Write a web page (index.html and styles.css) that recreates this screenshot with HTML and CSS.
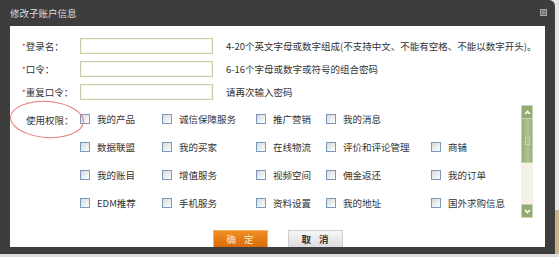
FILE: index.html
```html
<!DOCTYPE html>
<html lang="zh-CN">
<head>
    <meta charset="UTF-8">
    <title>修改子账户信息</title>
    <link rel="stylesheet" href="styles.css">
</head>
<body>
    <div class="dialog">
        <div class="dialog-title">
            <span>修改子账户信息</span>
            <span class="close-btn"></span>
        </div>
        <div class="dialog-body">
            <div class="form-row">
                <label class="form-label"><em>*</em>登录名：</label>
                <input type="text" class="text-input">
                <span class="hint">4-20个英文字母或数字组成(不支持中文、不能有空格、不能以数字开头)。</span>
            </div>
            <div class="form-row">
                <label class="form-label"><em>*</em>口令：</label>
                <input type="password" class="text-input">
                <span class="hint">6-16个字母或数字或符号的组合密码</span>
            </div>
            <div class="form-row">
                <label class="form-label"><em>*</em>重复口令：</label>
                <input type="password" class="text-input">
                <span class="hint">请再次输入密码</span>
            </div>

            <div class="perm-section">
                <span class="perm-circle"></span>
                <div class="perm-label">使用权限：</div>
                <div class="perm-box">
                    <div class="perm-grid">
                        <div class="perm-item"><span class="cb"></span>我的产品</div>
                        <div class="perm-item"><span class="cb"></span>诚信保障服务</div>
                        <div class="perm-item"><span class="cb"></span>推广营销</div>
                        <div class="perm-item"><span class="cb"></span>我的消息</div>
                        <div class="perm-item"></div>

                        <div class="perm-item"><span class="cb"></span>数据联盟</div>
                        <div class="perm-item"><span class="cb"></span>我的买家</div>
                        <div class="perm-item"><span class="cb"></span>在线物流</div>
                        <div class="perm-item"><span class="cb"></span>评价和评论管理</div>
                        <div class="perm-item"><span class="cb"></span>商铺</div>

                        <div class="perm-item"><span class="cb"></span>我的账目</div>
                        <div class="perm-item"><span class="cb"></span>增值服务</div>
                        <div class="perm-item"><span class="cb"></span>视频空间</div>
                        <div class="perm-item"><span class="cb"></span>佣金返还</div>
                        <div class="perm-item"><span class="cb"></span>我的订单</div>

                        <div class="perm-item"><span class="cb"></span>EDM推荐</div>
                        <div class="perm-item"><span class="cb"></span>手机服务</div>
                        <div class="perm-item"><span class="cb"></span>资料设置</div>
                        <div class="perm-item"><span class="cb"></span>我的地址</div>
                        <div class="perm-item"><span class="cb"></span>国外求购信息</div>
                    </div>
                    <div class="scrollbar">
                        <div class="sb-btn">
                            <svg width="7" height="5" viewBox="0 0 7 5"><path d="M1 4 L3.5 1.5 L6 4" fill="none" stroke="#fff" stroke-width="1.6"/></svg>
                        </div>
                        <div class="sb-thumb"><span class="sb-grip"></span></div>
                        <div class="sb-track"></div>
                        <div class="sb-btn">
                            <svg width="7" height="5" viewBox="0 0 7 5"><path d="M1 1 L3.5 3.5 L6 1" fill="none" stroke="#fff" stroke-width="1.6"/></svg>
                        </div>
                    </div>
                </div>
            </div>

            <div class="btn-row">
                <button class="btn btn-ok">确 定</button>
                <button class="btn btn-cancel">取 消</button>
            </div>
        </div>
    </div>
</body>
</html>
```

FILE: styles.css
```css
body {
    margin: 0;
    width: 559px;
    height: 257px;
    overflow: hidden;
    background: linear-gradient(to bottom, #e6e6e6 0, #e6e6e6 210px, #c9b48e 210px, #c9b48e 254px, #dcdcdc 254px);
    font-family: "Noto Sans CJK SC", sans-serif;
    font-size: 9.5px;
    color: #333;
}
.dialog {
    width: 555px;
    height: 254px;
    box-sizing: border-box;
    padding: 0 10px 7px 10px;
    background: #3d3d3d;
    border-radius: 0 6px 0 0;
}
.dialog-title {
    height: 26px;
    display: flex;
    align-items: center;
    justify-content: space-between;
    color: #dedede;
}
.close-btn {
    width: 7px;
    height: 7px;
    margin-right: -2px;
    margin-top: -1px;
    background: #8c8c8c;
    border: 1px solid #a8a8a8;
    box-sizing: border-box;
    box-shadow: inset 0 0 0 1px #6e6e6e;
}
.dialog-body {
    height: 221px;
    background: #fff;
    overflow: hidden;
    padding: 8px 0 0 12px;
    box-sizing: border-box;
}
.form-row {
    height: 23px;
    display: flex;
    align-items: center;
}
.form-label {
    width: 58px;
    flex-shrink: 0;
}
.form-label em {
    font-style: normal;
    color: #e02020;
    font-size: 8px;
}
.text-input {
    width: 133px;
    height: 16px;
    box-sizing: border-box;
    margin: 0;
    padding: 0 3px;
    border: 1px solid #c2d1a8;
    box-shadow: inset 0 0 0 1px #f1f5ea;
    outline: none;
}
.hint {
    margin-left: 13px;
    white-space: nowrap;
}
.perm-section {
    position: relative;
    display: flex;
    margin-top: 2px;
}
.perm-circle {
    position: absolute;
    left: -12px;
    top: -4px;
    width: 72px;
    height: 35px;
    border: 1px solid #e67a7a;
    border-radius: 50%;
    transform: rotate(4deg);
}
.perm-label {
    width: 54px;
    padding: 8px 0 0 4px;
    flex-shrink: 0;
}
.perm-box {
    display: flex;
    width: 453px;
    height: 113px;
    overflow: hidden;
}
.perm-grid {
    flex: 1;
    display: grid;
    grid-template-columns: 82px 94px 70px 105px auto;
    grid-auto-rows: 28px;
    align-content: start;
}
.perm-item {
    display: flex;
    align-items: center;
    white-space: nowrap;
}
.cb {
    width: 10px;
    height: 10px;
    box-sizing: border-box;
    margin-right: 7px;
    border: 1px solid #7b99bc;
    background: linear-gradient(135deg, #d9d9d9, #ffffff);
}
.scrollbar {
    width: 12px;
    display: flex;
    flex-direction: column;
}
.sb-btn {
    height: 14px;
    box-sizing: border-box;
    background: #93ab72;
    border: 1px solid #c7d5b2;
    display: flex;
    align-items: center;
    justify-content: center;
}
.sb-thumb {
    height: 44px;
    box-sizing: border-box;
    background: linear-gradient(to right, #98b07a, #adc294 60%, #9bb27d);
    border: 1px solid #c4d2ae;
    border-top: none;
    display: flex;
    align-items: center;
    justify-content: center;
}
.sb-grip {
    width: 3px;
    height: 6px;
    border: 1px solid #c6d4b2;
}
.sb-track {
    flex: 1;
    background: #f4f2e8;
}
.btn-row {
    display: flex;
    justify-content: center;
    gap: 20px;
    margin-top: 12px;
    padding-right: 12px;
}
.btn {
    width: 55px;
    height: 18px;
    padding: 0 0 0 3px;
    font-family: inherit;
    font-size: 9.5px;
    letter-spacing: 3px;
    cursor: pointer;
}
.btn-ok {
    background: linear-gradient(#f08e24, #da6c06);
    border: 1px solid #f4b266;
    color: #fde6cc;
}
.btn-cancel {
    background: linear-gradient(#f7f7f7, #dcdcdc);
    border: 1px solid #cfcfcf;
    color: #333;
    font-weight: bold;
}
```
